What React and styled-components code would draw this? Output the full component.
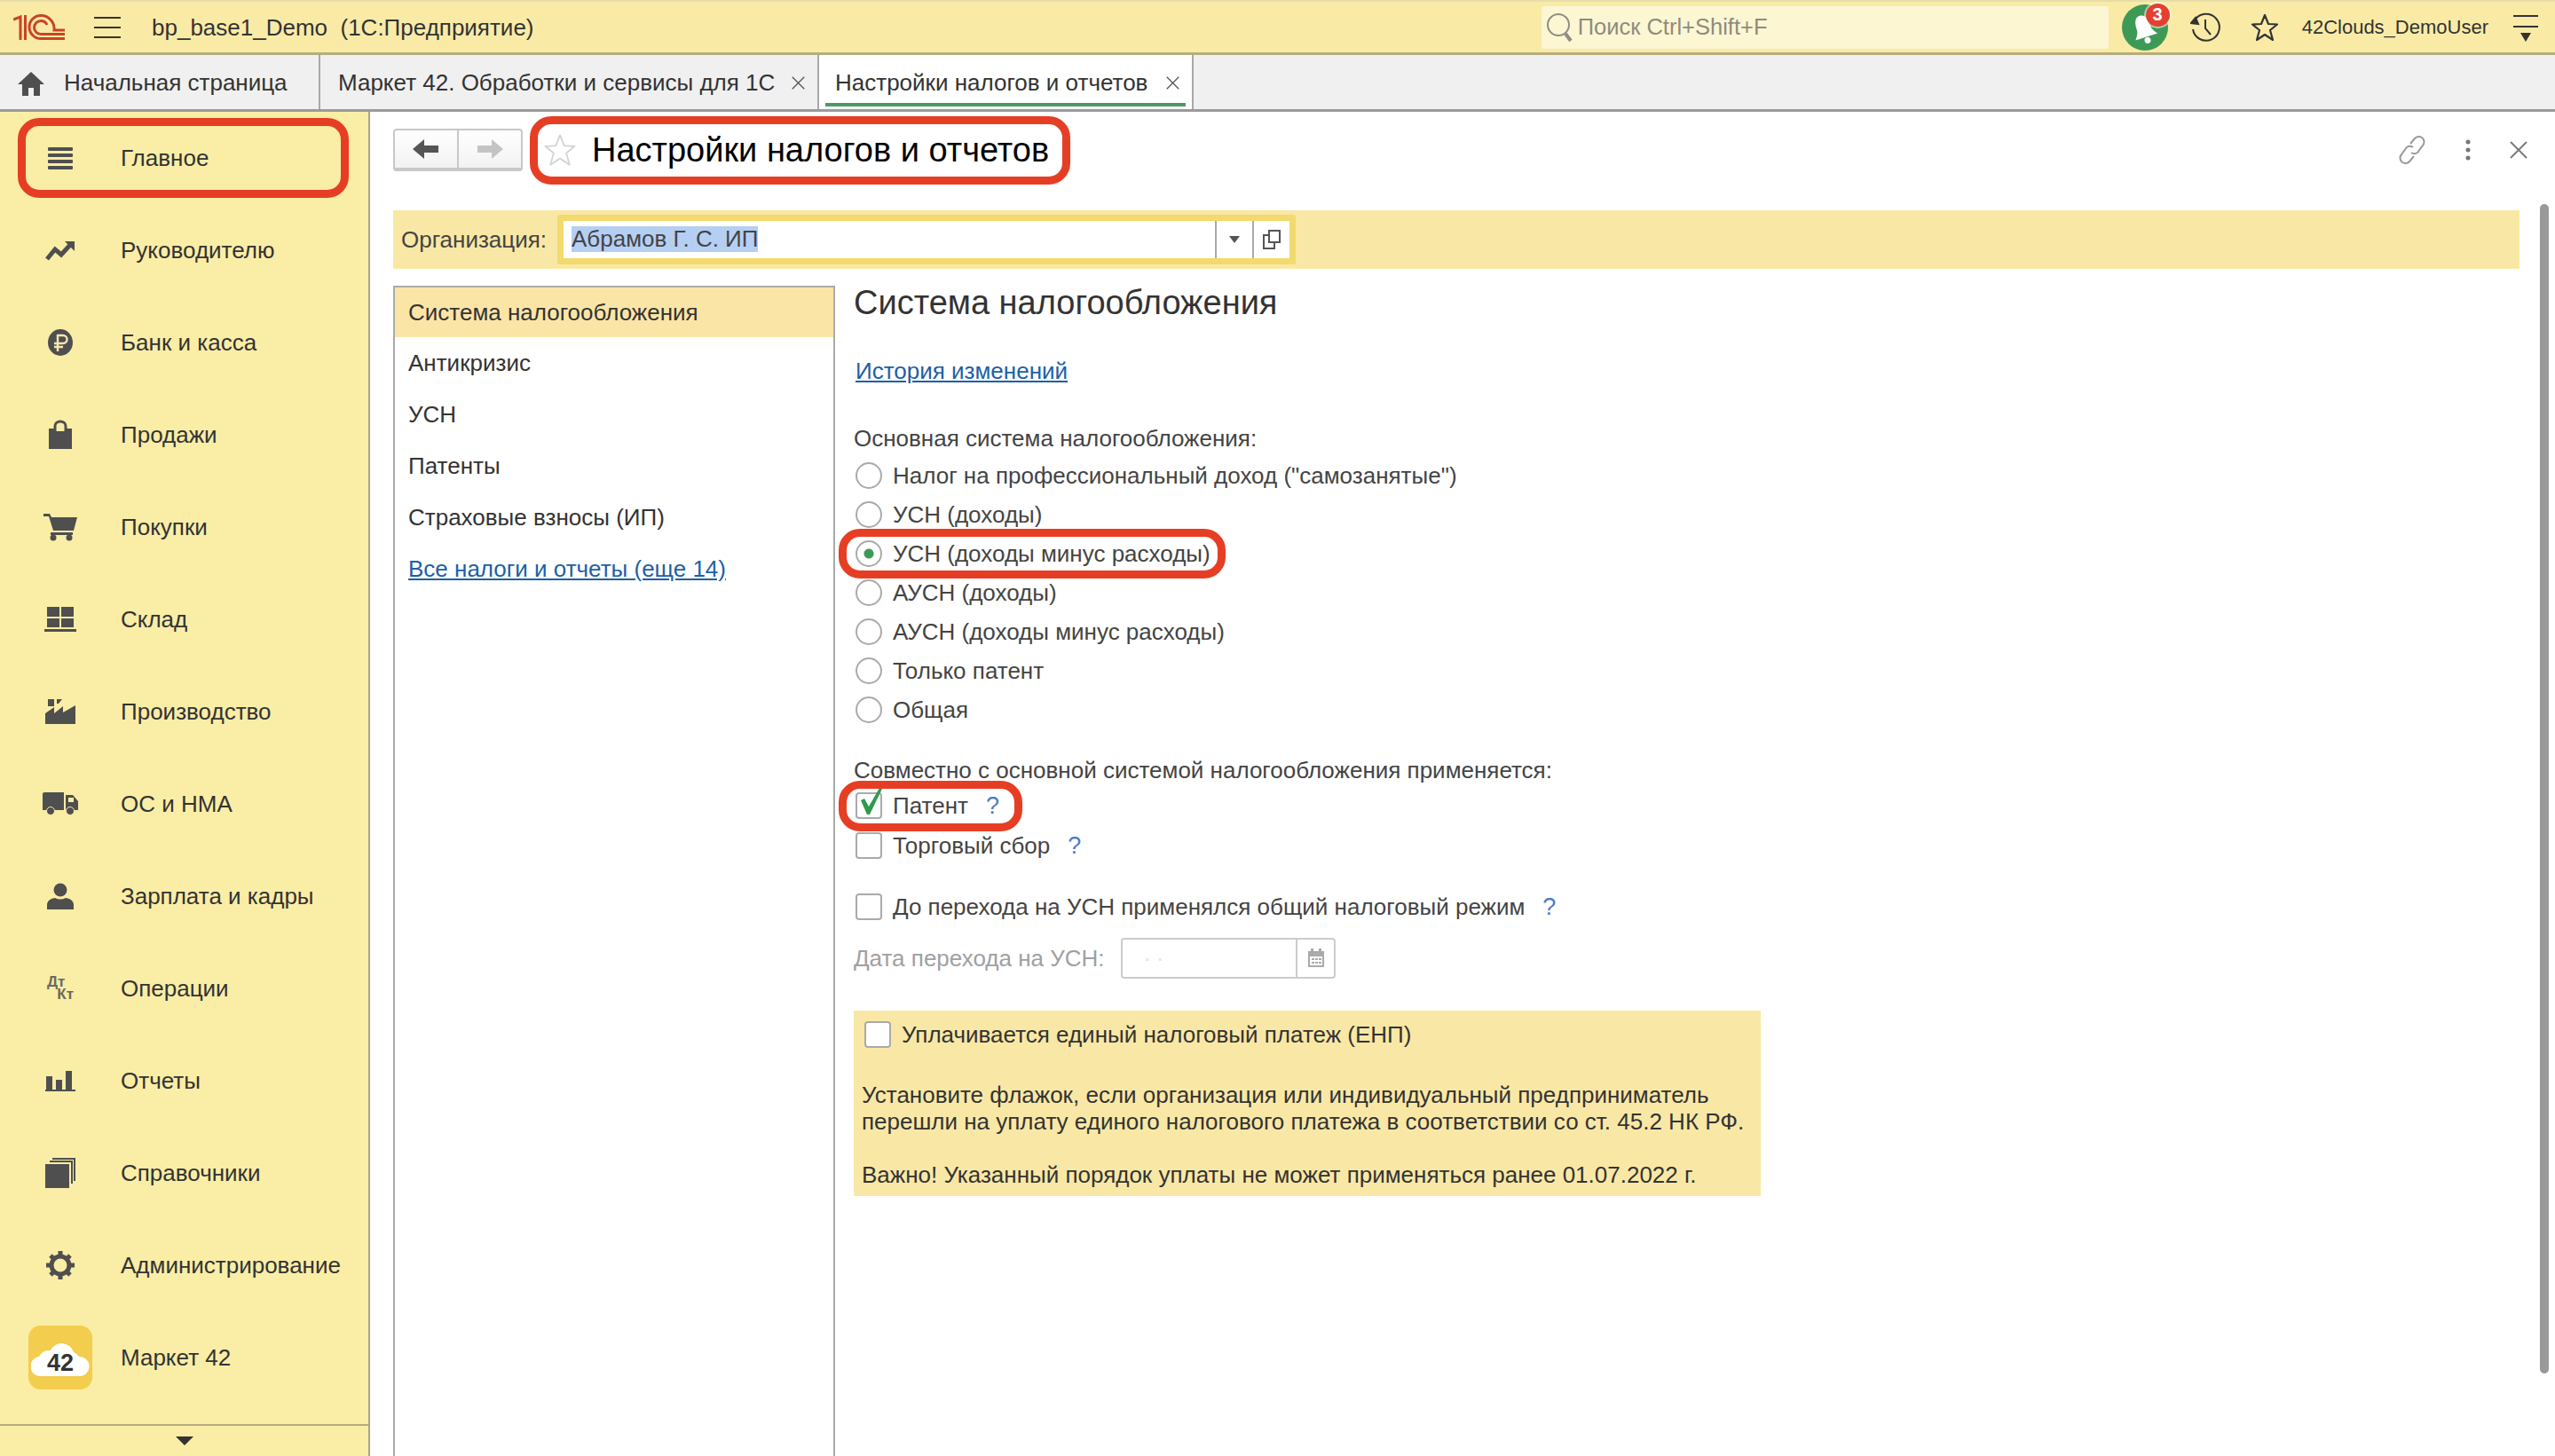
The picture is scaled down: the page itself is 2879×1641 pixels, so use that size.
import styled, { createGlobalStyle } from 'styled-components';

const GlobalStyle = createGlobalStyle`
  html, body {
    margin: 0;
    padding: 0;
    height: 100%;
    overflow: hidden;
    background: #fff;
    font-family: 'Liberation Sans', Arial, sans-serif;
    color: #333;
  }
  * { box-sizing: border-box; }
`;

const navItems = [
  ['Главное', 'menu'],
  ['Руководителю', 'trend'],
  ['Банк и касса', 'ruble'],
  ['Продажи', 'bag'],
  ['Покупки', 'cart'],
  ['Склад', 'boxes'],
  ['Производство', 'factory'],
  ['ОС и НМА', 'truck'],
  ['Зарплата и кадры', 'person'],
  ['Операции', 'dtkt'],
  ['Отчеты', 'bars'],
  ['Справочники', 'stack'],
  ['Администрирование', 'gear'],
  ['Маркет 42', 'market'],
];

const sections = ['Антикризис', 'УСН', 'Патенты', 'Страховые взносы (ИП)'];

const NavIcon = ({ name }) => {
  const c = '#4f4f4f';
  switch (name) {
    case 'menu':
      return (
        <svg width="30" height="30" viewBox="0 0 30 30" fill={c}>
          <rect x="1" y="3" width="28" height="4" rx="1" />
          <rect x="1" y="10" width="28" height="4" rx="1" />
          <rect x="1" y="17" width="28" height="4" rx="1" />
          <rect x="1" y="24" width="28" height="4" rx="1" />
        </svg>
      );
    case 'trend':
      return (
        <svg width="34" height="30" viewBox="0 0 34 30" fill="none">
          <path d="M2 25 L11 14 L18 20 L29 8" stroke={c} strokeWidth="5" />
          <path d="M22 5 H33 V16 Z" fill={c} />
        </svg>
      );
    case 'ruble':
      return (
        <svg width="30" height="32" viewBox="0 0 30 32">
          <ellipse cx="15" cy="16" rx="14" ry="15" fill={c} />
          <path d="M12 26 V8 H18 A4.5 4.5 0 0 1 18 17 H8 M8 21 H18" stroke="#f3e8b0" strokeWidth="2.4" fill="none" />
        </svg>
      );
    case 'bag':
      return (
        <svg width="30" height="34" viewBox="0 0 30 34" fill={c}>
          <path d="M2 10 H8 V13 H22 V10 H28 V33 H2 Z" />
          <path d="M9 13 V7 A6 5 0 0 1 21 7 V13" fill="none" stroke={c} strokeWidth="3" />
        </svg>
      );
    case 'cart':
      return (
        <svg width="38" height="32" viewBox="0 0 38 32" fill={c}>
          <path d="M0 1 H7 L9 5 H38 L34 20 H11 L6 4 H0 Z" />
          <rect x="8" y="22" width="25" height="3" />
          <circle cx="11" cy="28" r="3.5" />
          <circle cx="29" cy="28" r="3.5" />
        </svg>
      );
    case 'boxes':
      return (
        <svg width="36" height="30" viewBox="0 0 36 30" fill={c}>
          <rect x="3" y="1" width="14" height="11" />
          <rect x="19" y="1" width="14" height="11" />
          <rect x="3" y="14" width="14" height="10" />
          <rect x="19" y="14" width="14" height="10" />
          <rect x="0" y="26" width="36" height="3" />
        </svg>
      );
    case 'factory':
      return (
        <svg width="34" height="30" viewBox="0 0 34 30" fill={c}>
          <path d="M0 29 V17 L10 10 V17 L20 9 V16 L34 8 V29 Z" />
          <rect x="3" y="1" width="7" height="8" />
          <path d="M13 1 H19 L15 6 H13 Z" />
        </svg>
      );
    case 'truck':
      return (
        <svg width="40" height="26" viewBox="0 0 40 26" fill={c}>
          <path d="M0 2 A2 2 0 0 1 2 0 H24 V20 H0 Z" />
          <path d="M26 3 H34 L40 10 V20 H26 Z" />
          <rect x="29" y="6" width="6" height="5" fill="#faeda6" />
          <circle cx="9" cy="21" r="4.5" stroke="#faeda6" />
          <circle cx="31" cy="21" r="4.5" stroke="#faeda6" />
        </svg>
      );
    case 'person':
      return (
        <svg width="30" height="30" viewBox="0 0 30 30" fill={c}>
          <circle cx="15" cy="8" r="7.5" />
          <path d="M0 30 V24 Q1 18 9 17 Q15 20 21 17 Q29 18 30 24 V30 Z" />
        </svg>
      );
    case 'dtkt':
      return (
        <DtKt>
          <span>Дт</span>
          <span>Кт</span>
        </DtKt>
      );
    case 'bars':
      return (
        <svg width="34" height="24" viewBox="0 0 34 24" fill={c}>
          <rect x="1" y="7" width="7" height="15" />
          <rect x="12" y="11" width="7" height="11" />
          <rect x="23" y="1" width="7" height="21" />
          <rect x="0" y="22" width="34" height="2" />
        </svg>
      );
    case 'stack':
      return (
        <svg width="34" height="34" viewBox="0 0 34 34" fill={c}>
          <rect x="0" y="7" width="27" height="27" />
          <path d="M5 4 H30 V29" fill="none" stroke={c} strokeWidth="2" />
          <path d="M8 1 H33 V26" fill="none" stroke={c} strokeWidth="2" />
        </svg>
      );
    case 'gear':
      return (
        <svg width="34" height="34" viewBox="0 0 34 34" fill="none">
          <circle cx="17" cy="17" r="10" stroke={c} strokeWidth="5" />
          <path d="M17 1 V7 M17 27 V33 M1 17 H7 M27 17 H33 M6 6 L10 10 M24 24 L28 28 M28 6 L24 10 M10 24 L6 28" stroke={c} strokeWidth="5" />
        </svg>
      );
    default:
      return null;
  }
};

const Logo1C = () => (
  <svg width="60" height="30" viewBox="0 0 60 30" fill="none" stroke="#c8432b" strokeWidth="3">
    <path d="M0 6 L8 3 V29 M13.5 1 V29" />
    <path d="M58 27.5 H31 A13 13 0 0 1 31 1.5 A15 15 0 0 1 46 18 H58" />
    <path d="M58 22.5 H31 A7.5 7.5 0 0 1 31 7.5 A7.5 7.5 0 0 1 38 12" />
  </svg>
);

const Hamburger = () => (
  <svg width="30" height="26" viewBox="0 0 30 26" stroke="#3a3520" strokeWidth="2">
    <path d="M0 2 H30 M0 13 H30 M0 24 H30" />
  </svg>
);

const SearchIcon = () => (
  <svg width="32" height="34" viewBox="0 0 32 34" fill="none" stroke="#8f8d80">
    <circle cx="14" cy="14" r="12" strokeWidth="2" />
    <path d="M22 24 L28 32" strokeWidth="4" />
  </svg>
);

const HistoryIcon = () => (
  <svg width="34" height="34" viewBox="0 0 34 34" fill="none" stroke="#333" strokeWidth="2">
    <path d="M5 9 A15 15 0 1 1 3 19" />
    <path d="M1 12 L6 6 L9 13 Z" fill="#333" />
    <path d="M17 8 V18 L23 25" />
  </svg>
);

const StarIcon = ({ size = 32, color = '#333', width = 2.2 }) => (
  <svg width={size} height={size} viewBox="0 0 32 32" fill="none" stroke={color} strokeWidth={width}>
    <path d="M16 2 L20 12 L30 12.5 L22 19 L25 30 L16 24 L7 30 L10 19 L2 12.5 L12 12 Z" strokeLinejoin="round" />
  </svg>
);

const UserMenuIcon = () => (
  <svg width="30" height="34" viewBox="0 0 30 34" fill="#333">
    <rect x="1" y="3" width="28" height="2" />
    <rect x="1" y="15" width="28" height="2" />
    <path d="M9 23 H21 L15 33 Z" />
  </svg>
);

const ArrowIcon = ({ right, color }) => (
  <svg width="30" height="24" viewBox="0 0 30 24" fill={color} style={right ? { transform: 'scaleX(-1)' } : undefined}>
    <path d="M0 12 L13 1 V8 H29 V16 H13 V23 Z" />
  </svg>
);

const LinkIcon = () => (
  <svg width="32" height="34" viewBox="0 0 32 34" fill="none" stroke="#999" strokeWidth="2">
    <path d="M14 10 L19 4 A6 6 0 0 1 28 12 L22 20 A6 6 0 0 1 15 20" />
    <path d="M18 24 L13 30 A6 6 0 0 1 4 22 L10 14 A6 6 0 0 1 17 14" />
  </svg>
);

const DotsIcon = () => (
  <svg width="8" height="24" viewBox="0 0 8 24" fill="#777">
    <circle cx="4" cy="3" r="2.5" />
    <circle cx="4" cy="12" r="2.5" />
    <circle cx="4" cy="21" r="2.5" />
  </svg>
);

const CrossIcon = ({ size = 20, color = '#777' }) => (
  <svg width={size} height={size} viewBox="0 0 20 20" stroke={color} strokeWidth="1.8">
    <path d="M1 1 L19 19 M19 1 L1 19" />
  </svg>
);

const CopyIcon = () => (
  <svg width="20" height="22" viewBox="0 0 20 22" fill="none" stroke="#555" strokeWidth="2">
    <rect x="7" y="1" width="12" height="13" />
    <path d="M7 6 H1 V21 H13 V14" />
  </svg>
);

const CalendarIcon = () => (
  <svg width="20" height="22" viewBox="0 0 20 22" fill="#aaa">
    <rect x="4" y="0" width="3" height="5" />
    <rect x="13" y="0" width="3" height="5" />
    <path d="M1 3 H19 V21 H1 Z M3 9 V19 H17 V9 Z" />
    <path d="M5 11 H8 V13 H5 Z M9 11 H12 V13 H9 Z M13 11 H16 V13 H13 Z M5 15 H8 V17 H5 Z M9 15 H12 V17 H9 Z M13 15 H16 V17 H13 Z" />
  </svg>
);

const CheckMark = () => (
  <svg width="30" height="32" viewBox="0 0 30 32" fill="#2f9a4c">
    <path d="M5 14 L9 12 L14 21 L26 0 L29 1 L15 30 L12 30 Z" />
  </svg>
);

export default function App() {
  return (
    <Page>
      <GlobalStyle />
      <TopBar>
        <LogoSlot>
          <Logo1C />
        </LogoSlot>
        <MenuSlot>
          <Hamburger />
        </MenuSlot>
        <AppTitle>bp_base1_Demo&nbsp; (1С:Предприятие)</AppTitle>
        <SearchBox>
          <SearchIcon />
          <span>Поиск Ctrl+Shift+F</span>
        </SearchBox>
        <Notify>
          <svg width="52" height="52" viewBox="0 0 52 52">
            <circle cx="26" cy="26" r="26" fill="#3d9a56" />
            <g transform="rotate(-18 25 28)" fill="#fff">
              <path d="M25 12 C32 12 33 20 33 26 C33 31 36 34 38 37 H12 C14 34 17 31 17 26 C17 20 18 12 25 12 Z" />
              <circle cx="25" cy="41" r="3.5" />
            </g>
          </svg>
          <Badge>3</Badge>
        </Notify>
        <BarIcon $w={34} $ml={25}>
          <HistoryIcon />
        </BarIcon>
        <BarIcon $w={32} $ml={34}>
          <StarIcon />
        </BarIcon>
        <UserName>42Clouds_DemoUser</UserName>
        <UserMenu>
          <UserMenuIcon />
        </UserMenu>
      </TopBar>

      <TabBar>
        <Tab $w={361}>
          <HomeGlyph viewBox="0 0 30 30" fill="#4f4f4f">
            <path d="M15 2 L30 16 H25 V29 H18 V20 H12 V29 H5 V16 H0 Z" />
          </HomeGlyph>
          <TabText>Начальная страница</TabText>
        </Tab>
        <Tab $w={562}>
          <TabText>Маркет 42. Обработки и сервисы для 1С</TabText>
          <TabClose>
            <CrossIcon size={15} color="#555" />
          </TabClose>
        </Tab>
        <Tab $w={422} $active>
          <TabText>Настройки налогов и отчетов</TabText>
          <TabClose>
            <CrossIcon size={15} color="#555" />
          </TabClose>
        </Tab>
      </TabBar>

      <Body>
        <Sidebar>
          <NavList>
            {navItems.map(([label, icon]) => (
              <NavItem key={label}>
                {label === 'Главное' && <Ring $top={7} $right={22} $bottom={7} $left={20} />}
                <NavIconSlot>
                  {icon === 'market' ? (
                    <MarketTile>
                      <svg width="66" height="40" viewBox="0 0 66 40" fill="#fff">
                        <path d="M12 39 A11 11 0 0 1 9 17 A13 13 0 0 1 22 10 A14 14 0 0 1 48 12 A14 14 0 0 1 54 17 A11 11 0 0 1 55 39 Z" />
                      </svg>
                      <MarketNumber>42</MarketNumber>
                    </MarketTile>
                  ) : (
                    <NavIcon name={icon} />
                  )}
                </NavIconSlot>
                <NavLabel>{label}</NavLabel>
              </NavItem>
            ))}
          </NavList>
          <NavMore>
            <svg width="20" height="10" viewBox="0 0 20 10" fill="#333">
              <path d="M0 0 H20 L10 10 Z" />
            </svg>
          </NavMore>
        </Sidebar>

        <Content>
          <Toolbar>
            <HistoryButtons>
              <HistoryButton>
                <ArrowIcon color="#555" />
              </HistoryButton>
              <HistoryButton>
                <ArrowIcon right color="#c4c4c4" />
              </HistoryButton>
            </HistoryButtons>
            <TitleBlock>
              <Ring $top={-17} $right={-24} $bottom={-17} $left={-15} />
              <StarIcon size={38} color="#d4d4d4" width={1.6} />
              <PageTitle>Настройки налогов и отчетов</PageTitle>
            </TitleBlock>
            <ToolIcons>
              <LinkIcon />
              <DotsIcon />
              <CrossIcon size={20} />
            </ToolIcons>
          </Toolbar>

          <OrgBand>
            <OrgLabel>Организация:</OrgLabel>
            <OrgField>
              <OrgValue>
                <mark>Абрамов Г. С. ИП</mark>
              </OrgValue>
              <OrgButton>
                <svg width="12" height="8" viewBox="0 0 12 8" fill="#555">
                  <path d="M0 0 H12 L6 8 Z" />
                </svg>
              </OrgButton>
              <OrgButton>
                <CopyIcon />
              </OrgButton>
            </OrgField>
          </OrgBand>

          <Columns>
            <SectionList>
              <SectionItem $active>Система налогообложения</SectionItem>
              {sections.map((s) => (
                <SectionItem key={s}>{s}</SectionItem>
              ))}
              <SectionItem>
                <BlueLink>Все налоги и отчеты (еще 14)</BlueLink>
              </SectionItem>
            </SectionList>

            <Form>
              <Heading>Система налогообложения</Heading>
              <HistoryLink>
                <BlueLink>История изменений</BlueLink>
              </HistoryLink>
              <FieldLabel $mt={46}>Основная система налогообложения:</FieldLabel>
              <RadioGroup>
                <RadioRow label={'Налог на профессиональный доход ("самозанятые")'} />
                <RadioRow label="УСН (доходы)" />
                <RadioRow label="УСН (доходы минус расходы)" checked ringed />
                <RadioRow label="АУСН (доходы)" />
                <RadioRow label="АУСН (доходы минус расходы)" />
                <RadioRow label="Только патент" />
                <RadioRow label="Общая" />
              </RadioGroup>
              <FieldLabel $mt={31}>Совместно с основной системой налогообложения применяется:</FieldLabel>
              <CheckGroup>
                <CheckRow>
                  <Ring $top={-6} $right={-26} $bottom={-7} $left={-19} />
                  <CheckBox>
                    <CheckOverlay>
                      <CheckMark />
                    </CheckOverlay>
                  </CheckBox>
                  <span>Патент</span>
                  <Help $ml={20}>?</Help>
                </CheckRow>
                <CheckRow>
                  <CheckBox />
                  <span>Торговый сбор</span>
                  <Help $ml={20}>?</Help>
                </CheckRow>
              </CheckGroup>
              <LongCheck>
                <CheckBox />
                <span>До перехода на УСН применялся общий налоговый режим</span>
                <Help $ml={20}>?</Help>
              </LongCheck>
              <DateRow>
                <DateLabel>Дата перехода на УСН:</DateLabel>
                <DateField>
                  <DateValue>. .</DateValue>
                  <DateButton>
                    <CalendarIcon />
                  </DateButton>
                </DateField>
              </DateRow>
              <Notice>
                <NoticeCheck>
                  <CheckBox />
                  <span>Уплачивается единый налоговый платеж (ЕНП)</span>
                </NoticeCheck>
                <NoticeText $mt={31}>
                  Установите флажок, если организация или индивидуальный предприниматель
                  <br />
                  перешли на уплату единого налогового платежа в соответствии со ст. 45.2 НК РФ.
                </NoticeText>
                <NoticeText $mt={30}>Важно! Указанный порядок уплаты не может применяться ранее 01.07.2022 г.</NoticeText>
              </Notice>
            </Form>
          </Columns>
          <ScrollThumb />
        </Content>
      </Body>
    </Page>
  );
}

function RadioRow({ label, checked, ringed }) {
  return (
    <RadioLine>
      {ringed && <Ring $top={-6} $right={-17} $bottom={-6} $left={-19} />}
      <RadioDot $checked={checked} />
      <span>{label}</span>
    </RadioLine>
  );
}

const Page = styled.div`
  height: 100vh;
  display: flex;
  flex-direction: column;
  overflow: hidden;
`;

const TopBar = styled.header`
  height: 62px;
  flex: none;
  display: flex;
  align-items: center;
  background: #f9eba6;
  border-top: 2px solid #e6dca8;
  border-bottom: 3px solid #b5ad7c;
`;

const LogoSlot = styled.div`
  width: 60px;
  margin-left: 15px;
  display: flex;
`;

const MenuSlot = styled.div`
  margin-left: 31px;
  display: flex;
`;

const AppTitle = styled.div`
  margin-left: 35px;
  padding-top: 2px;
  font-size: 26px;
  color: #333;
  white-space: nowrap;
`;

const SearchBox = styled.div`
  margin-left: auto;
  width: 639px;
  height: 48px;
  display: flex;
  align-items: center;
  gap: 4px;
  padding-left: 5px;
  background: #fdf6d3;
  border-radius: 3px;
  font-size: 25.5px;
  color: #8e8c7d;
`;

const Notify = styled.div`
  position: relative;
  margin-left: 15px;
  width: 52px;
  height: 52px;
  display: flex;
`;

const Badge = styled.span`
  position: absolute;
  top: -1px;
  left: 27px;
  width: 27px;
  height: 26px;
  border-radius: 50%;
  background: #e5402f;
  box-shadow: 0 0 0 2px rgba(255, 255, 255, 0.55);
  color: #fff;
  font-size: 20px;
  font-weight: 700;
  display: flex;
  align-items: center;
  justify-content: center;
`;

const BarIcon = styled.div`
  width: ${(p) => p.$w}px;
  margin-left: ${(p) => p.$ml}px;
  display: flex;
`;

const UserName = styled.div`
  margin-left: 26px;
  font-size: 22px;
  color: #333;
  white-space: nowrap;
`;

const UserMenu = styled.div`
  margin-left: 27px;
  margin-right: 18px;
  display: flex;
`;

const TabBar = styled.nav`
  height: 64px;
  flex: none;
  display: flex;
  background: #f0f0f0;
  border-bottom: 3px solid #9a9a9a;
`;

const Tab = styled.div`
  position: relative;
  width: ${(p) => p.$w}px;
  display: flex;
  align-items: center;
  padding-left: ${(p) => (p.$active ? 18 : 20)}px;
  padding-top: 2px;
  border-right: 2px solid #a8a8a8;
  background: ${(p) => (p.$active ? '#fff' : 'transparent')};

  ${(p) =>
    p.$active &&
    `
    &::after {
      content: '';
      position: absolute;
      left: 7px;
      right: 7px;
      bottom: 3px;
      height: 4px;
      background: #4b9a60;
    }
  `}
`;

const HomeGlyph = styled.svg`
  width: 30px;
  height: 30px;
  flex: none;
  margin-right: 22px;
`;

const TabText = styled.span`
  font-size: 26px;
  color: #333;
  white-space: nowrap;
`;

const TabClose = styled.span`
  margin-left: auto;
  margin-right: 14px;
  display: flex;
`;

const Body = styled.div`
  flex: 1;
  min-height: 0;
  display: flex;
`;

const Sidebar = styled.aside`
  width: 417px;
  flex: none;
  display: flex;
  flex-direction: column;
  background: #faeda6;
  border-right: 2px solid #a8a487;
`;

const NavList = styled.div`
  flex: 1;
  min-height: 0;
  overflow: hidden;
`;

const NavItem = styled.div`
  position: relative;
  height: 104px;
  display: flex;
  align-items: center;
`;

const NavIconSlot = styled.div`
  width: 136px;
  flex: none;
  display: flex;
  align-items: center;
  justify-content: center;
`;

const NavLabel = styled.span`
  font-size: 26px;
  color: #333;
  white-space: nowrap;
`;

const DtKt = styled.div`
  width: 30px;
  display: flex;
  flex-direction: column;
  font-size: 17px;
  line-height: 14px;
  font-weight: 700;
  color: #6a6a5e;

  span:last-child {
    align-self: flex-end;
  }
`;

const MarketTile = styled.div`
  position: relative;
  width: 72px;
  height: 72px;
  border-radius: 14px;
  background: #f3cd4e;
  display: flex;
  align-items: flex-end;
  justify-content: center;
  padding-bottom: 14px;
`;

const MarketNumber = styled.span`
  position: absolute;
  left: 0;
  right: 0;
  bottom: 14px;
  text-align: center;
  font-size: 27px;
  font-weight: 700;
  color: #333;
`;

const NavMore = styled.div`
  height: 36px;
  flex: none;
  display: flex;
  align-items: center;
  justify-content: center;
  border-top: 2px solid #b5ad7c;
`;

const Ring = styled.span`
  position: absolute;
  top: ${(p) => p.$top}px;
  right: ${(p) => p.$right}px;
  bottom: ${(p) => p.$bottom}px;
  left: ${(p) => p.$left}px;
  border: 9px solid #e63e25;
  border-radius: 24px;
  pointer-events: none;
  z-index: 2;
`;

const Content = styled.main`
  position: relative;
  flex: 1;
  min-width: 0;
  display: flex;
  flex-direction: column;
  padding: 19px 40px 0 26px;
`;

const Toolbar = styled.div`
  height: 48px;
  flex: none;
  display: flex;
  align-items: center;
`;

const HistoryButtons = styled.div`
  width: 146px;
  height: 48px;
  display: flex;
  border: 2px solid #c8c8c8;
  border-bottom-width: 4px;
  border-radius: 4px;
  background: linear-gradient(#fff, #f2f2f2);
`;

const HistoryButton = styled.div`
  flex: 1;
  display: flex;
  align-items: center;
  justify-content: center;

  & + & {
    border-left: 2px solid #c8c8c8;
  }
`;

const TitleBlock = styled.div`
  position: relative;
  margin-left: 23px;
  display: flex;
  align-items: center;
  gap: 17px;
`;

const PageTitle = styled.h1`
  margin: 0;
  font-size: 38px;
  font-weight: 400;
  color: #000;
  white-space: nowrap;
`;

const ToolIcons = styled.div`
  margin-left: auto;
  margin-right: -9px;
  display: flex;
  align-items: center;
  gap: 43px;
`;

const OrgBand = styled.div`
  margin-top: 44px;
  height: 66px;
  flex: none;
  display: flex;
  align-items: center;
  padding-left: 9px;
  background: #f9e8a5;
`;

const OrgLabel = styled.span`
  width: 176px;
  font-size: 26px;
  color: #444;
  white-space: nowrap;
`;

const OrgField = styled.div`
  width: 832px;
  height: 56px;
  display: flex;
  background: #fff;
  border: 7px solid #f3da6e;
  border-radius: 2px;
`;

const OrgValue = styled.div`
  flex: 1;
  display: flex;
  align-items: center;
  padding-left: 9px;
  padding-bottom: 2px;
  font-size: 26px;
  color: #444;

  mark {
    background: #b5cff3;
    color: #444;
    line-height: 29px;
  }
`;

const OrgButton = styled.div`
  width: 42px;
  display: flex;
  align-items: center;
  justify-content: center;
  border-left: 2px solid #aaa;

  &:first-of-type {
    width: 44px;
  }
`;

const Columns = styled.div`
  margin-top: 19px;
  flex: 1;
  min-height: 0;
  display: flex;
  gap: 21px;
`;

const SectionList = styled.div`
  width: 498px;
  flex: none;
  border: 2px solid #aaa;
  border-bottom: none;
`;

const SectionItem = styled.div`
  height: ${(p) => (p.$active ? 56 : 58)}px;
  display: flex;
  align-items: center;
  padding-left: 15px;
  font-size: 26px;
  color: #333;
  white-space: nowrap;
  background: ${(p) => (p.$active ? '#fbe5a6' : 'transparent')};
`;

const BlueLink = styled.a`
  color: #1d5fa8;
  text-decoration: underline;
`;

const Form = styled.section`
  flex: 1;
  min-width: 0;
  font-size: 26px;
  color: #444;
`;

const Heading = styled.h2`
  margin: 0;
  height: 38px;
  display: flex;
  align-items: center;
  font-size: 38px;
  font-weight: 400;
  color: #333;
`;

const HistoryLink = styled.div`
  margin-top: 43px;
  height: 30px;
  display: flex;
  align-items: center;
  padding-left: 2px;
`;

const FieldLabel = styled.div`
  margin-top: ${(p) => p.$mt}px;
  height: 30px;
  display: flex;
  align-items: center;
`;

const RadioGroup = styled.div`
  margin-top: 5px;
  display: flex;
  flex-direction: column;
  align-items: flex-start;
`;

const RadioLine = styled.div`
  position: relative;
  height: 44px;
  display: inline-flex;
  align-items: center;
  gap: 12px;
  margin-left: 2px;
  white-space: nowrap;
`;

const RadioDot = styled.span`
  width: 30px;
  height: 30px;
  flex: none;
  border: 2px solid #aaa;
  border-radius: 50%;
  background: ${(p) => (p.$checked ? 'radial-gradient(circle, #3d9a56 0 5px, #fff 6px)' : '#fff')};
`;

const CheckGroup = styled.div`
  margin-top: 3px;
  display: flex;
  flex-direction: column;
  align-items: flex-start;
  gap: 1px;
`;

const CheckRow = styled.div`
  position: relative;
  height: 44px;
  display: inline-flex;
  align-items: center;
  margin-left: 2px;
  white-space: nowrap;
`;

const CheckBox = styled.span`
  position: relative;
  width: 30px;
  height: 30px;
  flex: none;
  margin-right: 12px;
  border: 2px solid #aaa;
  border-radius: 4px;
  background: #fff;
`;

const CheckOverlay = styled.span`
  position: absolute;
  left: -1px;
  top: -7px;
  display: flex;
`;

const Help = styled.span`
  margin-left: ${(p) => p.$ml}px;
  color: #4a7cc4;
  font-size: 27px;
`;

const LongCheck = styled(CheckRow)`
  display: flex;
  margin-top: 25px;
`;

const DateRow = styled.div`
  margin-top: 13px;
  height: 46px;
  display: flex;
  align-items: center;
`;

const DateLabel = styled.span`
  width: 301px;
  color: #a0a0a0;
  white-space: nowrap;
`;

const DateField = styled.div`
  width: 242px;
  height: 46px;
  display: flex;
  border: 2px solid #ccc;
  border-radius: 4px;
`;

const DateValue = styled.span`
  flex: 1;
  padding-left: 24px;
  color: #e4e4e4;
`;

const DateButton = styled.span`
  width: 43px;
  display: flex;
  align-items: center;
  justify-content: center;
  border-left: 2px solid #ccc;
`;

const Notice = styled.div`
  margin-top: 36px;
  width: 1022px;
  height: 209px;
  padding: 5px 9px 0;
  background: #f9e8a5;
  color: #333;
`;

const NoticeCheck = styled.div`
  height: 44px;
  display: flex;
  align-items: center;
  margin-left: 3px;
  white-space: nowrap;
`;

const NoticeText = styled.div`
  margin-top: ${(p) => p.$mt}px;
  font-size: 26px;
  line-height: 30px;
  white-space: nowrap;
`;

const ScrollThumb = styled.div`
  position: absolute;
  right: 7px;
  top: 104px;
  bottom: 93px;
  width: 10px;
  border-radius: 5px;
  background: #999;
`;
